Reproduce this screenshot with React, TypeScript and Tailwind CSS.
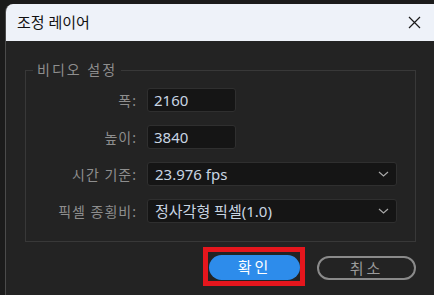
import React from 'react';

const font = "font-['Noto_Sans','Noto_Sans_CJK_KR',sans-serif]";

const Chevron = () => (
    <svg width="11" height="6" viewBox="0 0 11 6" fill="none" className="shrink-0">
        <path d="M1 1l4.5 4L10 1" stroke="#a8a8a8" strokeWidth="1.2" />
    </svg>
);

const Label = ({ children }: { children: React.ReactNode }) => (
    <div className="flex h-[24px] items-center justify-end text-[14px] tracking-[1px] text-[#8e8e8e]">
        {children}
    </div>
);

const TextBox = ({ value }: { value: string }) => (
    <div className="flex h-[24px] w-[89px] items-center rounded-[3px] border border-[#2f2f2f] bg-[#151515] pl-[6px] text-[15px] text-[#c9d5e3]">
        {value}
    </div>
);

const SelectBox = ({ value }: { value: string }) => (
    <div className="flex h-[24px] items-center justify-between rounded-[3px] border border-[#2f2f2f] bg-[#151515] pl-[7px] pr-[7px] text-[15px] text-[#c9d5e3]">
        <span>{value}</span>
        <Chevron />
    </div>
);

export default function App() {
    return (
        <div className={`flex h-[295px] w-[434px] overflow-hidden bg-[#1b1b1b] pl-[5px] pt-[4px] ${font}`}>
            <div className="flex flex-1 flex-col overflow-hidden rounded-tl-[8px] border-l border-[#4b4b4b] bg-[#232323]">
                {/* title bar */}
                <div className="flex h-[37px] shrink-0 items-center justify-between bg-[#eef2f9] pl-[11px] pr-[13px]">
                    <span className="text-[15px] text-[#111]">조정 레이어</span>
                    <svg width="13" height="13" viewBox="0 0 13 13" fill="none">
                        <path d="M1 1l11 11M12 1L1 12" stroke="#1a1a1a" strokeWidth="1.2" />
                    </svg>
                </div>

                <div className="flex flex-col pl-[19px] pr-[18px] pt-[19px]">
                    <fieldset className="border border-[#383838] pb-[18px] pr-[18px]">
                        <legend className="ml-[7px] px-[4px] text-[14px] leading-[20px] tracking-[2px] text-[#8e8e8e]">
                            비디오 설정
                        </legend>
                        <div className="grid grid-cols-[111px_1fr] gap-x-[10px] gap-y-[13px] pt-[8px]">
                            <Label>폭:</Label>
                            <TextBox value="2160" />
                            <Label>높이:</Label>
                            <TextBox value="3840" />
                            <Label>시간 기준:</Label>
                            <SelectBox value="23.976 fps" />
                            <Label>픽셀 종횡비:</Label>
                            <SelectBox value="정사각형 픽셀(1.0)" />
                        </div>
                    </fieldset>

                    <div className="mt-[5px] flex items-start justify-end gap-[12px] pr-[0px]">
                        <div className="border-[5px] border-[#e5161d] pb-[1px] pl-[1px] pt-[3px]">
                            <button className="flex h-[25px] w-[91px] items-center justify-center rounded-full bg-[#2d8ceb] text-[15px] tracking-[3px] text-white">
                                확인
                            </button>
                        </div>
                        <button className="mt-[9px] flex h-[24px] w-[99px] items-center justify-center rounded-full border-2 border-[#8a8a8a] text-[15px] tracking-[3px] text-[#9a9a9a]">
                            취소
                        </button>
                    </div>
                </div>
            </div>
        </div>
    );
}
